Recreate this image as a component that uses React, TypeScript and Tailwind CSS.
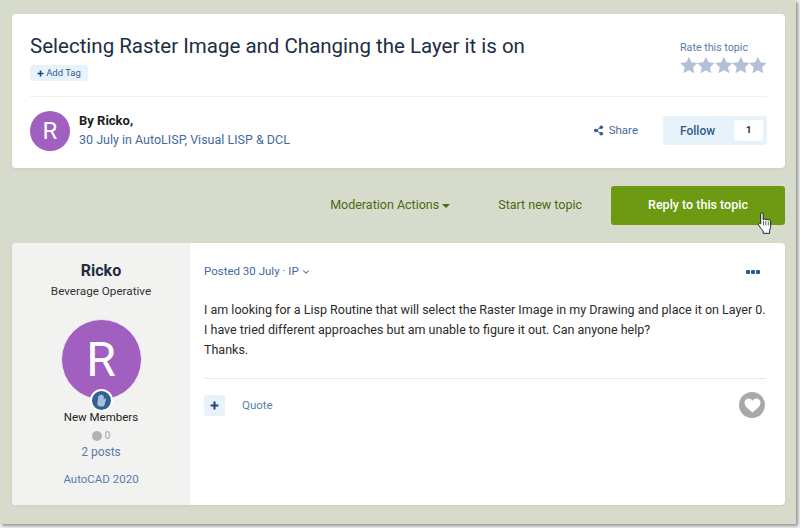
import { ChevronDown, Share2 } from "lucide-react";

const Star = () => (
  <svg viewBox="0 0 24 24" className="w-[18px] h-[18px] -mx-[0.2px] fill-[#b1c0d6]">
    <path d="M12 0.8l3.5 7.6 8.2 1-6.1 5.6 1.7 8.2L12 19.1l-7.3 4.1 1.7-8.2L.3 9.4l8.2-1z" />
  </svg>
);

const Plus = ({ className }: { className: string }) => (
  <svg viewBox="0 0 12 12" className={className}>
    <path d="M4.6 0.8h2.8v3.8h3.8v2.8H7.4v3.8H4.6V7.4H0.8V4.6h3.8z" />
  </svg>
);

const HandCursor = () => (
  <svg viewBox="1.5 0.5 14 23" className="absolute left-[146px] top-[26px] w-[16px] h-[23px]">
    <path
      d="M4.2 2.4c0-1.6 2.5-1.6 2.5 0v6.2c.2-1.4 2.4-1.4 2.5 0 .2-1.200 2.300-1.200 2.500.2.300-1 2.300-.8 2.400.6v5.400c0 1.500-.3 2.700-1 3.800v3.200H6.600v-2.400c-1.400-1.200-2.600-3.200-4.400-5.600-1-1.400.8-2.800 2-1.400V2.400z"
      fill="#fff"
      stroke="#222"
      strokeWidth="1"
      strokeLinejoin="round"
    />
    <path d="M7 9.500v4.500M9.300 9.500v4.500M11.800 10v4" stroke="#222" strokeWidth="0.7" />
  </svg>
);

export default function App() {
  return (
    <div className="w-[800px] h-[528px] bg-[#f4f4f2] overflow-hidden font-['Roboto',sans-serif]">
      <div className="w-[796px] h-[524px] bg-[#d7dbcb] shadow-[2px_2px_3px_rgba(0,0,0,0.4)] pl-3 pr-[11px] pt-[14px]">
        {/* topic header */}
        <div className="h-[154px] bg-white rounded-[4px] px-[18px] shadow-[0_1px_3px_rgba(0,0,0,0.06)]">
          <div className="h-[83px] flex justify-between border-b border-[#f0f0f0]">
            <div className="pt-[17px]">
              <h1 className="text-[20.5px] leading-[30px] text-[#1d2d44]">Selecting Raster Image and Changing the Layer it is on</h1>
              <div className="mt-[4px] w-[58px] h-[16px] rounded-[3px] bg-[#e8f2fb] flex items-center justify-center gap-[2px] text-[9.5px] text-[#2f5d8c]">
                <Plus className="w-[7px] h-[7px] fill-[#1c4a78]" />
                Add Tag
              </div>
            </div>
            <div className="pt-[27px] w-[87px]">
              <div className="text-[10.7px] leading-[14px] text-[#5a7cab]">Rate this topic</div>
              <div className="flex mt-[1px]">
                <Star />
                <Star />
                <Star />
                <Star />
                <Star />
              </div>
            </div>
          </div>
          <div className="h-[70px] flex items-center">
            <div className="w-10 h-10 rounded-full bg-[#a160bf] flex items-center justify-center text-white text-[24px] mt-[-3px]">R</div>
            <div className="ml-[9px] mt-[-3px]">
              <div className="text-[13px] leading-[18px] font-bold text-[#1c1c1c]">By Ricko,</div>
              <div className="text-[12.5px] leading-[19px] text-[#43699e]">30 July in AutoLISP, Visual LISP & DCL</div>
            </div>
            <div className="ml-auto flex items-center gap-[5px] text-[11.5px] text-[#43699e] mt-[-3px]">
              <Share2 className="w-[11px] h-[11px] fill-[#2d5a8f] text-[#2d5a8f]" />
              Share
            </div>
            <div className="ml-[25px] mt-[-3px] w-[104px] h-[29px] rounded-[3px] bg-[#e8f2fb] flex items-center pl-[17px] text-[12px] font-medium text-[#2f5d8c]">
              Follow
              <span className="ml-[19px] w-[29px] h-[21px] bg-white rounded-[3px] flex items-center justify-center text-[9.5px] font-bold text-[#1c1c1c]">1</span>
            </div>
          </div>
        </div>

        {/* actions */}
        <div className="h-[39px] mt-[18px] flex items-center justify-end text-[12.5px] text-[#4a6b10]">
          <span className="flex items-center gap-[3px]">
            Moderation Actions
            <span className="w-0 h-0 border-x-[4px] border-x-transparent border-t-[4px] border-t-[#4a6b10]" />
          </span>
          <span className="ml-[48px]">Start new topic</span>
          <div className="relative ml-[29px] w-[174px] h-[39px] rounded-[3px] bg-[#6d9a13] flex items-center justify-center text-white font-medium">
            Reply to this topic
            <HandCursor />
          </div>
        </div>

        {/* post */}
        <div className="h-[262px] mt-[18px] bg-white rounded-[4px] flex overflow-hidden shadow-[0_1px_3px_rgba(0,0,0,0.06)]">
          <aside className="w-[178px] bg-[#f2f2f1] flex flex-col items-center pt-[18px]">
            <div className="text-[16px] leading-[20px] font-bold text-[#1d2d44]">Ricko</div>
            <div className="text-[11.7px] leading-[15px] mt-[3px] text-[#333]">Beverage Operative</div>
            <div className="relative mt-[20px] w-[81px] h-[81px] rounded-full bg-[#a160bf] border border-[#efe6f3] flex items-center justify-center text-white text-[48px]">
              R
              <div className="absolute left-[28px] top-[69px] w-[23px] h-[23px] rounded-full bg-[#2f6196] border-2 border-white flex items-center justify-center">
                <svg viewBox="0 0 12 12" className="w-[15px] h-[15px] fill-[#a9bfd8]">
                  <path d="M3.2 5V3c0-.8 1-.8 1 0V2c0-.8 1.200-.8 1.200 0v-.3c0-.8 1.200-.8 1.200 0v.6c0-.8 1.200-.7 1.200 0v3l.8-.8c.6-.6 1.400 0 1 .7L8.400 9.500c-.5.8-1 1.200-2 1.200H5c-1.500 0-2.300-1-2.500-2.500z" />
                </svg>
              </div>
            </div>
            <div className="text-[11.5px] leading-[15px] mt-[10px] text-[#222]">New Members</div>
            <div className="flex items-center gap-[3px] mt-[4px] text-[10.5px] leading-[14px] font-medium text-[#b2b2b2]">
              <span className="w-[10px] h-[10px] rounded-full bg-[#b2b2b2]" />0
            </div>
            <div className="text-[12px] leading-[16px] mt-[1px] text-[#5a7cab]">2 posts</div>
            <div className="text-[11.5px] leading-[15px] mt-[12px] text-[#5a7cab]">AutoCAD 2020</div>
          </aside>
          <div className="flex-1 pl-[14px] pr-[19px] flex flex-col">
            <div className="h-[57px] flex items-center justify-between">
              <div className="flex items-center gap-[2px] text-[11.5px] text-[#43699e]">
                Posted 30 July · IP
                <ChevronDown className="w-[10px] h-[10px]" strokeWidth={2.5} />
              </div>
              <div className="flex gap-[1px] mr-[6px]">
                <span className="w-[4px] h-[4px] rounded-[1px] bg-[#2d5a8f]" />
                <span className="w-[4px] h-[4px] rounded-[1px] bg-[#2d5a8f]" />
                <span className="w-[4px] h-[4px] rounded-[1px] bg-[#2d5a8f]" />
              </div>
            </div>
            <div className="text-[12.5px] leading-[20px] h-[79px] text-[#2b2b2b] border-b border-[#e8e8e8]">
              <p>I am looking for a Lisp Routine that will select the Raster Image in my Drawing and place it on Layer 0.</p>
              <p>I have tried different approaches but am unable to figure it out. Can anyone help?</p>
              <p>Thanks.</p>
            </div>
            <div className="flex items-center mt-[13px]">
              <div className="w-[21px] h-[21px] rounded-[3px] bg-[#e8f2fb] flex items-center justify-center">
                <Plus className="w-[9px] h-[9px] fill-[#1c4a78]" />
              </div>
              <span className="ml-[17px] mt-[1px] text-[11.5px] text-[#5a7cab]">Quote</span>
              <div className="ml-auto mr-[1px] w-[26px] h-[26px] rounded-full bg-[#a8a8a8] flex items-center justify-center">
                <svg viewBox="0 0 16 14" className="w-[17px] h-[15px] fill-white">
                  <path d="M8 13.500C3.500 10 .5 7.500.5 4.400.5 2.200 2.200.5 4.300.5 5.800.5 7.200 1.300 8 2.600 8.800 1.300 10.200.5 11.700.5c2.100 0 3.800 1.700 3.800 3.900 0 3.100-3 5.600-7.500 9.100z" />
                </svg>
              </div>
            </div>
          </div>
        </div>
      </div>
    </div>
  );
}
